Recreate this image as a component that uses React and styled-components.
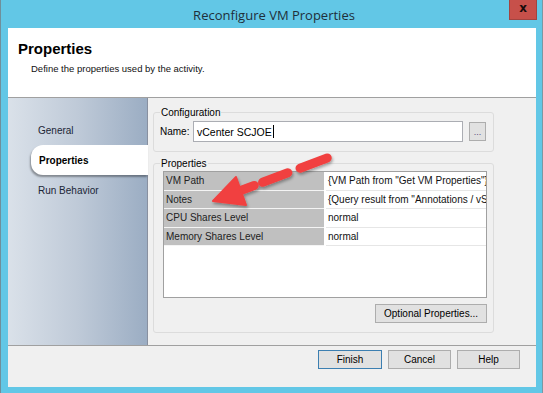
import styled, { createGlobalStyle } from 'styled-components'

const GlobalStyle = createGlobalStyle`
  html, body {
    margin: 0;
    padding: 0;
    background: #62c7e6;
  }
  * { box-sizing: border-box; }
`

const rows = [
  { key: 'VM Path', value: '{VM Path from "Get VM Properties"}' },
  { key: 'Notes', value: '{Query result from "Annotations / vSphere Notes"}' },
  { key: 'CPU Shares Level', value: 'normal' },
  { key: 'Memory Shares Level', value: 'normal' },
]

const tabs = ['General', 'Properties', 'Run Behavior']

function Arrow() {
  // dashed callout arrow drawn over the dialog
  const tip = [212, 201]
  const dir = [0.936, -0.353]
  const at = (t) => [tip[0] + dir[0] * t, tip[1] + dir[1] * t]
  const seg = (a, b) => {
    const p = at(a)
    const q = at(b)
    return `M${p[0]} ${p[1]} L${q[0]} ${q[1]}`
  }
  return (
    <Overlay width="543" height="393" viewBox="0 0 543 393">
      <defs>
        <filter id="sh" x="-20%" y="-20%" width="140%" height="140%">
          <feDropShadow dx="1" dy="2" stdDeviation="1.5" floodColor="#000" floodOpacity="0.35" />
        </filter>
      </defs>
      <g filter="url(#sh)" fill="#f1403f" stroke="#f1403f" strokeLinecap="round">
        <path d={seg(26, 44) + ' ' + seg(53, 80) + ' ' + seg(93, 122)} strokeWidth="9" fill="none" />
        <polygon points="212,201 235,177 245,205" strokeWidth="2" strokeLinejoin="round" />
      </g>
    </Overlay>
  )
}

export default function App() {
  return (
    <>
      <GlobalStyle />
      <Window>
        <TitleBar>
          <span />
          <Title>Reconfigure VM Properties</Title>
          <CloseButton>x</CloseButton>
        </TitleBar>
        <Body>
          <Header>
            <HeaderTitle>Properties</HeaderTitle>
            <HeaderText>Define the properties used by the activity.</HeaderText>
          </Header>
          <Main>
            <Nav>
              {tabs.map((t) => (
                <Tab key={t} $active={t === 'Properties'}>{t}</Tab>
              ))}
            </Nav>
            <Content>
              <Group $h={45}>
                <Legend>Configuration</Legend>
                <NameRow>
                  <Label>Name:</Label>
                  <TextBox>vCenter SCJOE<Caret /></TextBox>
                  <DotsButton>...</DotsButton>
                </NameRow>
              </Group>
              <Group $h={175}>
                <Legend>Properties</Legend>
                <Grid>
                  {rows.map((r) => (
                    <Row key={r.key}>
                      <KeyCell>{r.key}</KeyCell>
                      <ValueCell>{r.value}</ValueCell>
                    </Row>
                  ))}
                </Grid>
                <GroupFooter>
                  <Button $w={112}>Optional Properties...</Button>
                </GroupFooter>
              </Group>
            </Content>
          </Main>
          <Footer>
            <Button $w={64} $default>Finish</Button>
            <Button $w={63}>Cancel</Button>
            <Button $w={63}>Help</Button>
          </Footer>
        </Body>
        <Arrow />
      </Window>
    </>
  )
}

const Window = styled.div`
  position: relative;
  width: 543px;
  height: 393px;
  display: flex;
  flex-direction: column;
  padding: 0 6px 6px 7px;
  background: #62c7e6;
  border-left: 1px solid #6f8f9b;
  border-right: 1px solid #7a98a3;
  font-family: "Liberation Sans", Arial, sans-serif;
  font-size: 10px;
  color: #000;
  overflow: hidden;
`
const TitleBar = styled.div`
  height: 28px;
  display: grid;
  grid-template-columns: 1fr auto 1fr;
  align-items: start;
`
const Title = styled.div`
  padding-top: 6px;
  font-family: "Open Sans", "Liberation Sans", sans-serif;
  font-size: 13px;
  color: #1f2f3a;
  transform: translateX(2px);
`
const CloseButton = styled.div`
  justify-self: end;
  width: 28px;
  height: 20px;
  margin-right: -1px;
  background: #c7504a;
  border: 1px solid #a24440;
  border-top: none;
  color: #1a0c0c;
  font-family: "DejaVu Sans", sans-serif;
  font-weight: bold;
  font-size: 12px;
  line-height: 17px;
  text-align: center;
`
const Body = styled.div`
  flex: 1;
  display: flex;
  flex-direction: column;
  background: #f0f0f0;
`
const Header = styled.div`
  height: 70px;
  background: #fff;
  border-bottom: 1px solid #a0a0a0;
  padding: 12px 0 0 10px;
`
const HeaderTitle = styled.div`
  font-size: 15px;
  font-weight: bold;
  color: #000;
  line-height: 18px;
`
const HeaderText = styled.div`
  margin: 5px 0 0 13px;
  font-size: 9.5px;
  color: #111;
`
const Main = styled.div`
  height: 247px;
  display: flex;
`
const Nav = styled.div`
  width: 140px;
  display: flex;
  flex-direction: column;
  padding-top: 17px;
  background: linear-gradient(to right, #dae1e9 0%, #bfcad8 50%, #9badc3 100%);
  border-right: 1px solid #8890a0;
`
const Tab = styled.div`
  height: 30px;
  display: flex;
  align-items: center;
  margin-left: ${(p) => (p.$active ? '23px' : '0')};
  margin-right: ${(p) => (p.$active ? '-1px' : '0')};
  padding-left: ${(p) => (p.$active ? '8px' : '30px')};
  font-weight: ${(p) => (p.$active ? 'bold' : 'normal')};
  color: ${(p) => (p.$active ? '#000' : '#1b2636')};
  background: ${(p) => (p.$active ? '#fff' : 'transparent')};
  border-radius: ${(p) => (p.$active ? '12px 0 0 12px' : '0')};
  box-shadow: ${(p) => (p.$active ? '-1px 2px 2px rgba(0,0,0,0.35)' : 'none')};
`
const Content = styled.div`
  flex: 1;
  display: flex;
  flex-direction: column;
  gap: 6px;
  padding: 9px 42px 0 5px;
`
const Group = styled.fieldset`
  margin: 0;
  height: ${(p) => p.$h}px;
  padding: 0 6px 0 9px;
  border: 1px solid #dcdcdc;
  border-radius: 3px;
  display: flex;
  flex-direction: column;
`
const Legend = styled.legend`
  padding: 0 1px;
  margin-left: -3px;
  font-size: 10px;
  color: #000;
`
const NameRow = styled.div`
  display: flex;
  align-items: center;
  margin-top: 3px;
  margin-left: -3px;
`
const Label = styled.span`
  width: 33px;
`
const TextBox = styled.div`
  width: 270px;
  height: 21px;
  display: flex;
  align-items: center;
  padding-left: 3px;
  background: #fff;
  border: 1px solid #abadb3;
  font-size: 10.5px;
`
const Caret = styled.span`
  width: 1px;
  height: 13px;
  margin-left: 1px;
  background: #000;
`
const DotsButton = styled.div`
  width: 17px;
  height: 19px;
  margin-left: 6px;
  background: #e1e1e1;
  border: 1px solid #adadad;
  font-size: 9px;
  text-align: center;
  line-height: 18px;
  color: #5a4a80;
`
const Grid = styled.div`
  height: 127px;
  margin-top: 2px;
  background: #fff;
  border: 1px solid #a0a0a0;
  overflow: hidden;
`
const Row = styled.div`
  height: 18.5px;
  display: grid;
  grid-template-columns: 160px 1fr;
  column-gap: 2px;
`
const KeyCell = styled.div`
  display: flex;
  align-items: center;
  padding-left: 2px;
  background: #c0c0c0;
  border-bottom: 1.5px solid #f4f4f4;
  color: #222;
`
const ValueCell = styled.div`
  display: flex;
  align-items: center;
  padding-left: 2px;
  white-space: nowrap;
  overflow: hidden;
  border-bottom: 1px solid #e6e6e6;
  color: #111;
`
const GroupFooter = styled.div`
  display: flex;
  justify-content: flex-end;
  margin-top: 6px;
`
const Button = styled.div`
  width: ${(p) => p.$w}px;
  height: 19px;
  display: flex;
  align-items: center;
  justify-content: center;
  background: #e1e1e1;
  border: 1px solid ${(p) => (p.$default ? '#3c7fb1' : '#adadad')};
  color: #000;
  font-size: 10px;
`
const Footer = styled.div`
  flex: 1;
  display: flex;
  justify-content: flex-end;
  align-items: flex-start;
  gap: 6px;
  padding: 4px 16px 0 0;
  border-top: 1px solid #a0a0a0;
`
const Overlay = styled.svg`
  position: absolute;
  left: 0;
  top: 0;
  pointer-events: none;
`
